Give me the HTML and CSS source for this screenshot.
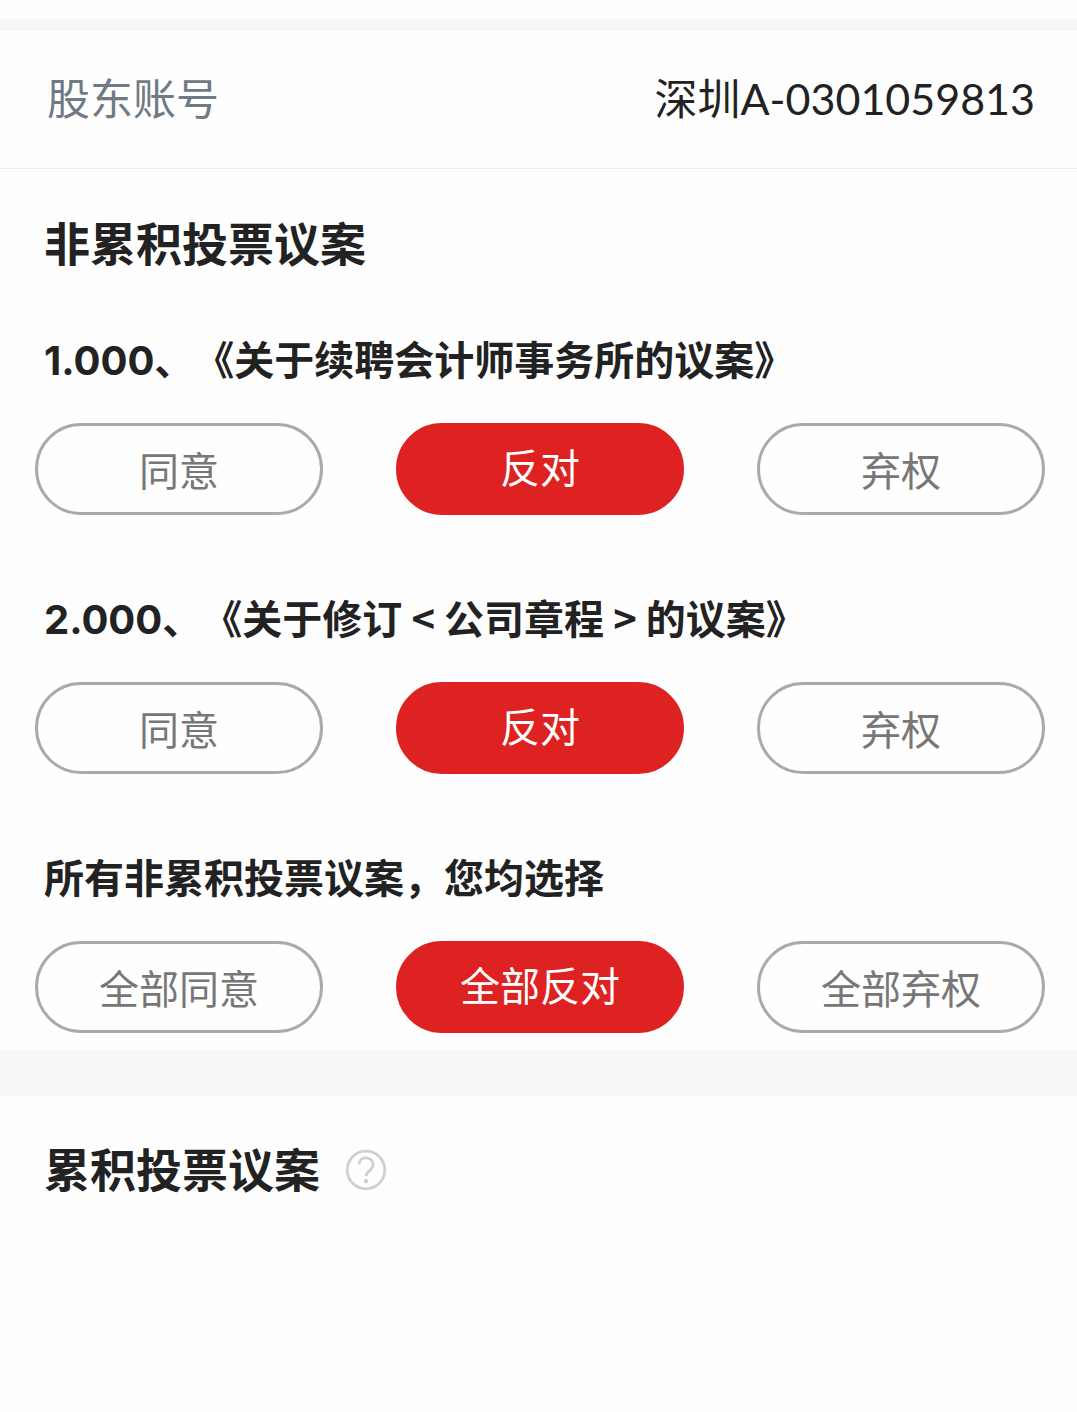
FILE: index.html
```html
<!DOCTYPE html>
<html lang="zh-CN">
<head>
    <meta charset="UTF-8">
    <meta name="viewport" content="width=device-width, initial-scale=1.0">
    <title>股东投票</title>
    <link rel="stylesheet" href="styles.css">
</head>
<body>
    <div class="account">
        <span class="account-label">股东账号</span>
        <span class="account-number">深圳A-0301059813</span>
    </div>

    <section class="vote-section">
        <h2>非累积投票议案</h2>

        <div class="proposal">
            <h3>1.000、《关于续聘会计师事务所的议案》</h3>
            <div class="options">
                <button type="button" class="option">同意</button>
                <button type="button" class="option selected">反对</button>
                <button type="button" class="option">弃权</button>
            </div>
        </div>

        <div class="proposal">
            <h3>2.000、《关于修订<span class="bracket"> &lt; </span>公司章程<span class="bracket"> &gt; </span>的议案》</h3>
            <div class="options">
                <button type="button" class="option">同意</button>
                <button type="button" class="option selected">反对</button>
                <button type="button" class="option">弃权</button>
            </div>
        </div>

        <div class="proposal">
            <h3>所有非累积投票议案，您均选择</h3>
            <div class="options">
                <button type="button" class="option">全部同意</button>
                <button type="button" class="option selected">全部反对</button>
                <button type="button" class="option">全部弃权</button>
            </div>
        </div>
    </section>

    <section class="cumulative-section">
        <h2>累积投票议案</h2>
        <button type="button" class="help-btn" aria-label="帮助">
            <svg width="42" height="42" viewBox="0 0 42 42" fill="none" stroke="#d0d0d0">
                <circle cx="21" cy="21" r="18.8" stroke-width="2.8"/>
                <path d="M14 15.500C14 11.500 17 8.800 21 8.800s7.200 2.800 7.200 6.700c0 3-1.700 4.600-3.800 6.300-2.200 1.800-3.400 3-3.400 5.500" stroke-width="2.800"/>
                <circle cx="21" cy="32" r="2.200" fill="#d0d0d0" stroke="none"/>
            </svg>
        </button>
    </section>

    <script>
        document.querySelectorAll(".options").forEach(group => {
            group.addEventListener("click", function (e) {
                const btn = e.target.closest(".option");
                if (!btn) return;
                group.querySelectorAll(".option").forEach(b => b.classList.remove("selected"));
                btn.classList.add("selected");
            });
        });
    </script>
</body>
</html>
```
FILE: styles.css
```css
* {
    box-sizing: border-box;
}

body {
    font-family: Lato, "Noto Sans CJK SC", sans-serif;
    margin: 0;
    padding-top: 19px;
    color: #222;
    background: #fefefe;
    text-spacing-trim: space-all;
}

.account {
    display: flex;
    justify-content: space-between;
    align-items: center;
    padding: 36px 42px 37px 47px;
    border-top: 12px solid #f7f7f7;
    border-bottom: 1px solid #eee;
    font-size: 43px;
    line-height: 64px;
}

.account-label {
    color: #6f7a85;
}

h2 {
    margin: 0;
    padding-left: 44px;
    font-size: 46px;
    line-height: 64px;
}

h3 {
    margin: 0;
    padding-left: 44px;
    font-family: Inter, "Noto Sans CJK SC", sans-serif;
    font-size: 40px;
    line-height: 60px;
}

.bracket {
    font-family: "Noto Sans CJK SC", sans-serif;
    line-height: 1;
}

.vote-section {
    padding: 43px 0 17px;
    border-bottom: 46px solid #f7f7f7;
}

.proposal {
    margin-top: 75px;
}

h2 + .proposal {
    margin-top: 55px;
}

.options {
    display: flex;
    justify-content: space-between;
    padding: 32px 32px 0 35px;
}

.option {
    width: 288px;
    height: 92px;
    padding: 4px 0 0;
    border: 3px solid #aaa;
    border-radius: 46px;
    background: none;
    color: #777;
    font-family: inherit;
    font-size: 40px;
    line-height: 60px;
    cursor: pointer;
}

.option.selected {
    padding: 0 0 2px;
    border-color: #de2222;
    background: #de2222;
    color: #fff;
}

.cumulative-section {
    display: flex;
    align-items: center;
    padding-top: 42px;
}

.help-btn {
    display: flex;
    margin-left: 25px;
    padding: 0;
    border: none;
    background: none;
    cursor: pointer;
}
```
